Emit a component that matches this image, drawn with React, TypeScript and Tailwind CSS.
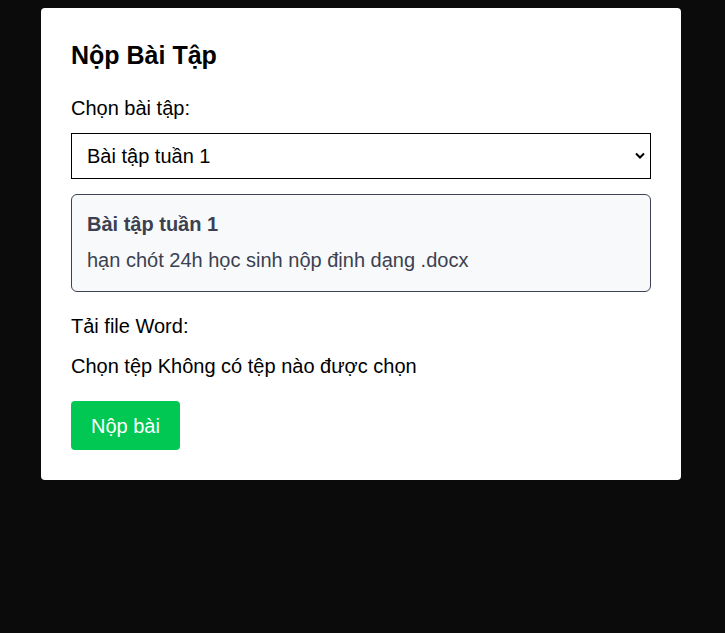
import { useState } from 'react';

const assignments = [
  { id: 1, title: 'Bài tập tuần 1', note: 'hạn chót 24h học sinh nộp định dạng .docx' },
  { id: 2, title: 'Bài tập tuần 2', note: 'hạn chót 24h học sinh nộp định dạng .docx' },
];

const App = () => {
  const [selected, setSelected] = useState(1);
  const current = assignments.find((a) => a.id === selected) ?? assignments[0];

  return (
    <div
      className="min-h-screen bg-[#0b0b0b] pt-2 text-black"
      style={{ fontFamily: '"Liberation Sans", Arial, sans-serif' }}
    >
      <div className="ml-[41px] w-[640px] rounded bg-white px-[30px] pt-[30px] pb-[30px]">
        <h2 className="mt-px mb-[26px] text-[25px] font-bold leading-[32px]">Nộp Bài Tập</h2>

        <label className="mb-[14px] block text-[20px] leading-[22px]">Chọn bài tập:</label>
        <div className="relative">
          <select
            value={selected}
            onChange={(e) => setSelected(Number(e.target.value))}
            className="block h-[46px] w-full appearance-none border border-black bg-white px-[15px] text-[20px] outline-none"
          >
            {assignments.map((a) => (
              <option key={a.id} value={a.id}>
                {a.title}
              </option>
            ))}
          </select>
          <svg
            className="pointer-events-none absolute right-[6px] top-[19px]"
            width="10"
            height="8"
            viewBox="0 0 10 8"
          >
            <path d="M1 1.5 L5 5.5 L9 1.5" fill="none" stroke="#000" strokeWidth="2" />
          </svg>
        </div>

        {/* Info */}
        <div className="mt-[15px] rounded-md border border-[#3b4252] bg-[#f8f9fa] px-[15px] pt-4 pb-[18px] text-[#3b4150]">
          <div className="text-[20px] font-bold leading-[26px]">{current.title}</div>
          <div className="mt-[10px] text-[20px] leading-[26px]">{current.note}</div>
        </div>

        <label className="mt-[23px] block text-[20px] leading-[22px]">Tải file Word:</label>
        <div className="mt-[18px] text-[20px] leading-[22px]">Chọn tệp Không có tệp nào được chọn</div>

        <button className="mt-[24px] h-[49px] rounded bg-[#00c853] px-5 text-[20px] text-white">
          Nộp bài
        </button>
      </div>
    </div>
  );
};

export default App;
